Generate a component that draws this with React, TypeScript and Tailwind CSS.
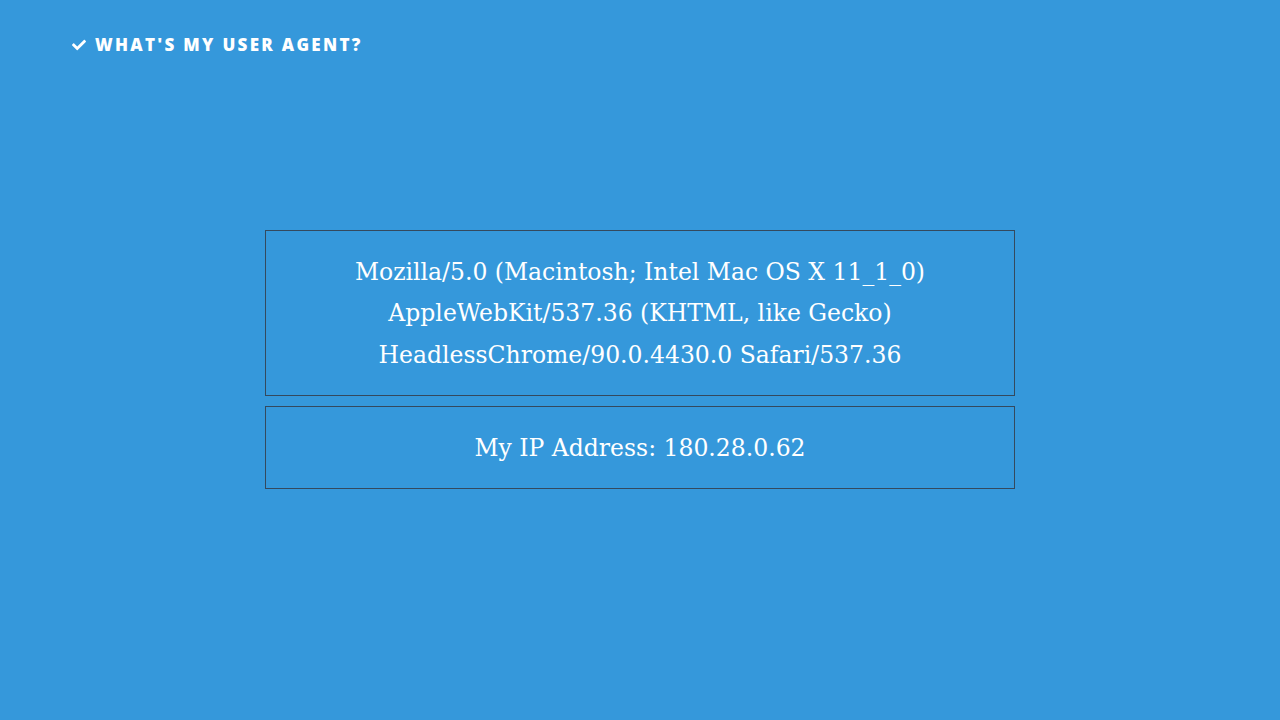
import React from "react";

export default function App() {
  return (
    <div className="min-h-[720px] w-full bg-[#3598db] text-white">
      <header className="flex items-center gap-[8px] pl-[71px] pt-[35px] h-[54px]">
        <svg width="16" height="14" viewBox="0 0 512 512" className="shrink-0" fill="white">
          <path d="M173.898 439.404l-166.4-166.4c-9.997-9.997-9.997-26.206 0-36.204l36.203-36.204c9.997-9.998 26.207-9.998 36.204 0L192 312.69 432.095 72.596c9.997-9.997 26.207-9.997 36.204 0l36.203 36.204c9.997 9.997 9.997 26.206 0 36.204l-294.4 294.401c-9.998 9.997-26.207 9.997-36.204-.001z" />
        </svg>
        <span className="font-['Open_Sans',sans-serif] font-extrabold text-[17px] tracking-[2.3px] leading-none">
          WHAT'S MY USER AGENT?
        </span>
      </header>
      <main className="flex flex-col items-center pt-[176px] gap-[10px] font-['DejaVu_Serif',serif] text-[23.5px] leading-[41.25px]">
        <div className="w-[750px] border border-[#34495e] pt-[21px] pb-[19px] text-center">
          Mozilla/5.0 (Macintosh; Intel Mac OS X 11_1_0)
          <br />
          AppleWebKit/537.36 (KHTML, like Gecko)
          <br />
          HeadlessChrome/90.0.4430.0 Safari/537.36
        </div>
        <div className="w-[750px] border border-[#34495e] pt-[21px] pb-[19px] text-center">
          My IP Address: 180.28.0.62
        </div>
      </main>
    </div>
  );
}
